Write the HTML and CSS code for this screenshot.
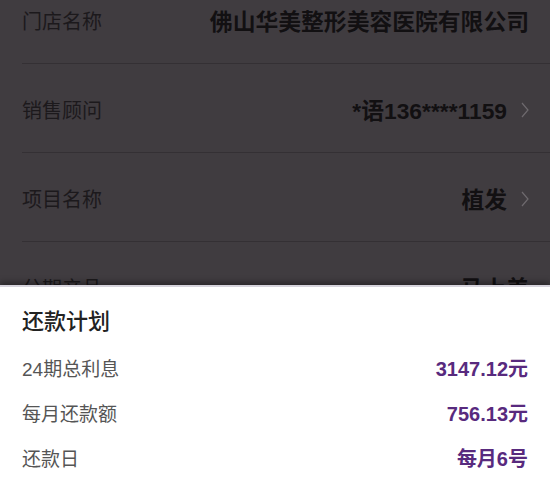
FILE: index.html
```html
<!DOCTYPE html>
<html lang="zh-CN">
<head>
	<meta charset="UTF-8">
	<title>还款计划</title>
	<link rel="stylesheet" href="styles.css">
</head>
<body>
	<div class="page">
		<ul class="list">
			<li class="row">
				<span class="label">门店名称</span>
				<span class="value">佛山华美整形美容医院有限公司</span>
			</li>
			<li class="row">
				<span class="label">销售顾问</span>
				<span class="value">*语136****1159</span>
				<svg class="arrow" width="8" height="16" viewBox="0 0 8 16"><polyline points="1,1 7,8 1,15" fill="none" stroke="#6e6a6e" stroke-width="1.2"/></svg>
			</li>
			<li class="row">
				<span class="label">项目名称</span>
				<span class="value">植发</span>
				<svg class="arrow" width="8" height="16" viewBox="0 0 8 16"><polyline points="1,1 7,8 1,15" fill="none" stroke="#6e6a6e" stroke-width="1.2"/></svg>
			</li>
			<li class="row">
				<span class="label">分期产品</span>
				<span class="value">马上美</span>
			</li>
		</ul>

		<div class="sheet">
			<h2 class="sheet-title">还款计划</h2>
			<div class="plan-row">
				<span class="plan-label">24期总利息</span>
				<span class="plan-value">3147.12元</span>
			</div>
			<div class="plan-row">
				<span class="plan-label">每月还款额</span>
				<span class="plan-value">756.13元</span>
			</div>
			<div class="plan-row">
				<span class="plan-label">还款日</span>
				<span class="plan-value">每月6号</span>
			</div>
		</div>
	</div>
</body>
</html>
```

FILE: styles.css
```css
*{
	margin: 0;
	padding: 0;
	box-sizing: border-box;
}
body{
	font-family: "Liberation Sans", "Noto Sans CJK SC", sans-serif;
	background: #403c40;
}
.page{
	position: relative;
	width: 550px;
	height: 494px;
	overflow: hidden;
	background: #403c40;
}
.list{
	list-style: none;
	margin-top: -25px;
	padding-left: 22px;
}
.row{
	display: flex;
	align-items: center;
	height: 89px;
	padding: 3px 21px 0 0;
	border-bottom: 1px solid #343034;
}
.label{
	font-size: 20px;
	color: #1c191c;
}
.value{
	margin-left: auto;
	font-size: 22.8px;
	font-weight: 700;
	color: #121012;
}
.arrow{
	margin-left: 14px;
}
.sheet{
	position: absolute;
	left: 0;
	right: 0;
	bottom: 0;
	height: 209px;
	padding: 20px 22px 0 22px;
	background: #fff;
	border-top: 2px solid #d6d3dc;
	box-shadow: 0 -3px 6px rgba(0,0,0,.35);
}
.sheet-title{
	font-size: 22px;
	font-weight: 500;
	line-height: 30px;
	color: #222;
	margin-bottom: 8px;
}
.plan-row{
	display: flex;
	justify-content: space-between;
	align-items: center;
	height: 45px;
}
.plan-label{
	font-size: 19px;
	color: #555;
}
.plan-value{
	font-size: 20px;
	font-weight: 700;
	color: #582a7e;
}
```
